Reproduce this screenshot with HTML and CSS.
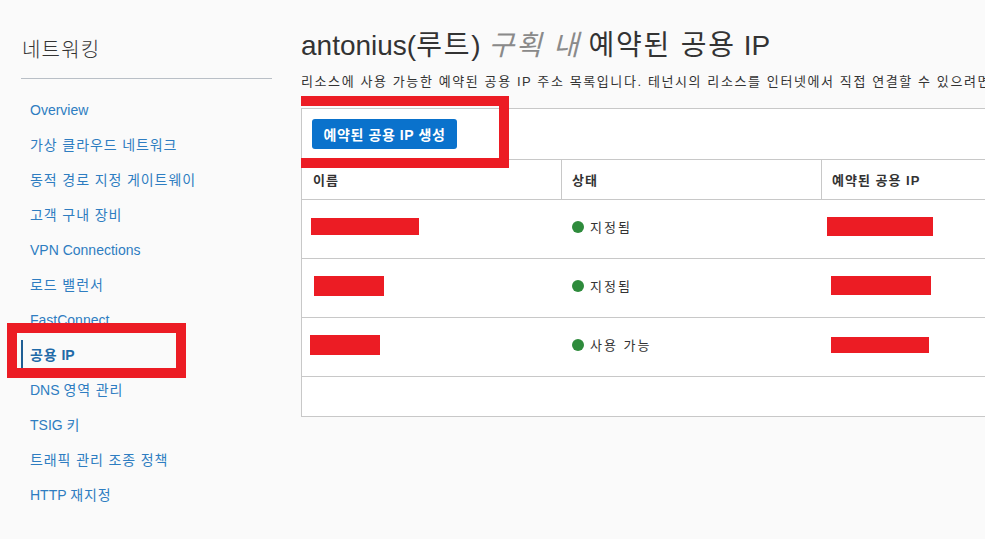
FILE: index.html
```html
<!DOCTYPE html>
<html lang="ko">
<head>
<meta charset="utf-8">
<title>예약된 공용 IP</title>
<link rel="stylesheet" href="styles.css">
</head>
<body>
<div class="layout">
  <aside class="sidebar">
    <div class="side-title">네트워킹</div>
    <ul class="nav">
      <li class="nav-item">Overview</li>
      <li class="nav-item"><span class="ko">가상 클라우드 네트워크</span></li>
      <li class="nav-item"><span class="ko">동적 경로 지정 게이트웨이</span></li>
      <li class="nav-item"><span class="ko">고객 구내 장비</span></li>
      <li class="nav-item">VPN Connections</li>
      <li class="nav-item"><span class="ko">로드 밸런서</span></li>
      <li class="nav-item">FastConnect</li>
      <li class="nav-item active"><span class="ko">공용</span> IP<span class="mark mark-nav"></span></li>
      <li class="nav-item">DNS <span class="ko">영역 관리</span></li>
      <li class="nav-item">TSIG <span class="ko">키</span></li>
      <li class="nav-item"><span class="ko">트래픽 관리 조종 정책</span></li>
      <li class="nav-item">HTTP <span class="ko">재지정</span></li>
    </ul>
  </aside>
  <main class="main">
    <h1 class="title">antonius(<span class="ko-t">루트</span>) <em class="scope ko-t">구획 내</em> <span class="ko-t">예약된 공용</span> IP</h1>
    <p class="subtitle">리소스에 사용 가능한 예약된 공용 IP 주소 목록입니다. 테넌시의 리소스를 인터넷에서 직접 연결할 수 있으려면</p>
    <section class="panel">
      <span class="mark mark-btn"></span>
      <div class="toolbar">
        <button class="btn-primary">예약된 공용 IP 생성</button>
      </div>
      <div class="row head">
        <div class="cell">이름</div>
        <div class="cell">상태</div>
        <div class="cell">예약된 공용 IP</div>
      </div>
      <div class="row">
        <div class="cell"><span class="redact" style="width:108px;margin-left:-2px"></span></div>
        <div class="cell"><span class="dot"></span>지정됨</div>
        <div class="cell"><span class="redact" style="width:106px;margin-left:-5px;height:19px"></span></div>
      </div>
      <div class="row">
        <div class="cell"><span class="redact" style="width:70px;margin-left:1px;height:20px"></span></div>
        <div class="cell"><span class="dot"></span>지정됨</div>
        <div class="cell"><span class="redact" style="width:100px;margin-left:-1px;height:19px"></span></div>
      </div>
      <div class="row">
        <div class="cell"><span class="redact" style="width:70px;margin-left:-3px;height:20px"></span></div>
        <div class="cell"><span class="dot"></span>사용 가능</div>
        <div class="cell"><span class="redact" style="width:98px;margin-left:-1px;height:16px"></span></div>
      </div>
      <div class="empty"></div>
    </section>
  </main>
</div>
</body>
</html>
```

FILE: styles.css
```css
* { box-sizing: border-box; }
html, body { margin: 0; padding: 0; }
body {
  width: 985px;
  height: 539px;
  overflow: hidden;
  background: #fafafa;
  color: #333;
  font-family: "Liberation Sans", "Noto Sans CJK KR", sans-serif;
}
.layout { display: flex; height: 539px; }

.sidebar {
  width: 301px;
  flex: none;
  padding: 36px 29px 0 21px;
}
.side-title {
  font-size: 20px;
  line-height: 28px;
  font-weight: 300;
  letter-spacing: 1.2px;
  color: #333;
  padding-bottom: 14px;
  border-bottom: 1px solid #b9bfc6;
  padding-left: 1px;
}
.nav {
  list-style: none;
  margin: 16px 0 0;
  padding: 0;
  display: flex;
  flex-direction: column;
  gap: 5px;
}
.nav-item {
  position: relative;
  height: 30px;
  line-height: 30px;
  font-size: 14px;
  color: #2e7dc1;
  padding-left: 9px;
  white-space: nowrap;
}
.ko { letter-spacing: 0.9px; }
.nav-item.active {
  border-left: 2px solid #1f5f95;
  padding-left: 7px;
  font-weight: bold;
  color: #1f6aa8;
}

.mark {
  position: absolute;
  border: 10px solid #ec1c24;
  z-index: 5;
}
.mark-nav { left: -16px; top: -17px; width: 179px; height: 55px; }
.mark-btn { left: -11px; top: -13px; width: 218px; height: 72px; }

.main {
  flex: 1;
  min-width: 0;
  overflow: hidden;
  padding-top: 28px;
}
.title {
  margin: 0;
  font-size: 28px;
  line-height: 36px;
  font-weight: normal;
  color: #333;
  white-space: nowrap;
}
.ko-t { letter-spacing: 1.8px; }
.scope { color: #8a8a8a; font-style: italic; }
.subtitle {
  margin: 8px 0 0;
  font-size: 13px;
  line-height: 20px;
  letter-spacing: 1.6px;
  color: #333;
  white-space: nowrap;
}
.panel {
  position: relative;
  margin-top: 16px;
  width: 720px;
  background: #fff;
  border: 1px solid #c8c8c8;
}
.toolbar { padding: 10px 10px; height: 50px; }
.btn-primary {
  height: 30px;
  width: 145px;
  border: 0;
  border-radius: 3px;
  background: #0a72cc;
  color: #fff;
  font-family: inherit;
  font-size: 14px;
  font-weight: bold;
  letter-spacing: 0.6px;
  padding: 0;
}
.row {
  display: grid;
  grid-template-columns: 259px 260px 1fr;
  height: 59px;
  border-top: 1px solid #c8c8c8;
  align-items: center;
  font-size: 13px;
}
.row.head { height: 40px; }
.row.head .cell {
  height: 100%;
  display: flex;
  align-items: center;
  font-weight: bold;
  letter-spacing: 1px;
  color: #333;
  padding-bottom: 0;
}
.row.head .cell + .cell { border-left: 1px solid #c8c8c8; }
.row.head .cell:nth-child(2) { padding-left: 10px; }
.row.head .cell:nth-child(3) { padding-left: 10px; }
.cell {
  padding-left: 11px;
  padding-bottom: 5px;
  display: flex;
  align-items: center;
  color: #333;
  letter-spacing: 2px;
}
.redact {
  display: inline-block;
  height: 17px;
  background: #ec1c24;
}
.dot {
  width: 12px;
  height: 12px;
  border-radius: 50%;
  background: #2e8b3c;
  margin-right: 6px;
  flex: none;
}
.empty { height: 40px; border-top: 1px solid #c8c8c8; }
```
